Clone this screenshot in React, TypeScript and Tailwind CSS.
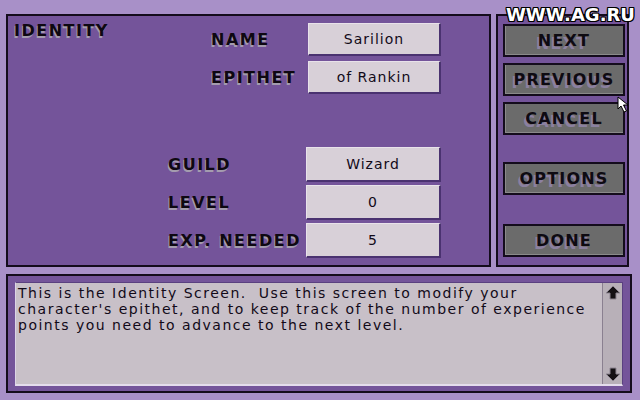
import React from "react";

const LABEL =
  "font-['DejaVu_Sans',sans-serif] font-bold text-[16px] leading-[16px] tracking-[1.5px] text-[#0e0812] [text-shadow:-1px_2px_0_#a49cae]";

const VALUE =
  "font-['DejaVu_Sans',sans-serif] text-[14px] leading-[16px] tracking-[1px] text-[#120a18]";

const BUTTON =
  "h-[33px] w-[122px] shrink-0 border-2 border-[#140c1c] bg-[#6b6b6b] shadow-[inset_1px_-1px_0_#8a8a8a] flex items-center justify-center font-['DejaVu_Sans',sans-serif] font-bold text-[16px] leading-[16px] tracking-[1.2px] text-[#0e0a12] [text-shadow:-2px_3px_0_#8b80a0]";

type FieldProps = { label: string; value: string };

const Field = ({ label, value }: FieldProps) => (
  <>
    <div className={`flex items-center ${LABEL}`}>{label}</div>
    <div className="flex items-center justify-center bg-[#d8d0d8] border-t border-l border-t-[#e8e2ea] border-l-[#e8e2ea] border-b-2 border-r-2 border-b-[#4a3270] border-r-[#4a3270]">
      <span className={VALUE}>{value}</span>
    </div>
  </>
);

const Arrow = ({ down = false }: { down?: boolean }) => (
  <svg width="16" height="15" viewBox="0 0 16 15" className={down ? "rotate-180" : ""}>
    <path d="M8 1 L15 8 L11 8 L11 14 L5 14 L5 8 L1 8 Z" fill="#141014" stroke="#8c8490" strokeWidth="1" />
  </svg>
);

const Cursor = () => (
  <svg width="16" height="17" viewBox="0 0 16 17" className="absolute left-[617px] top-[96px]">
    <path d="M1 1 L1 13 L4 10 L7 16 L9.5 15 L6.5 9 L11 9 Z" fill="#ffffff" stroke="#000000" strokeWidth="1" />
  </svg>
);

const LINES = [
  "This is the Identity Screen.  Use this screen to modify your",
  "character's epithet, and to keep track of the number of experience",
  "points you need to advance to the next level.",
];

export default function App() {
  return (
    <div className="relative w-[640px] h-[400px] overflow-hidden bg-[#a890c8] pt-[14px] pl-[6px]">
      {/* top row: identity sheet + command column */}
      <div className="flex h-[253px] gap-[5px]">
        <div className="w-[485px] border-2 border-[#140c1c] bg-[#74549a] pt-[7px] flex flex-col">
          <div className="flex">
            <div className="w-[203px] pl-[6px]">
              <div className={`${LABEL} leading-[14px]`}>IDENTITY</div>
            </div>
            <div className="grid grid-cols-[97px_133px] auto-rows-[33px] gap-y-[5px]">
              <Field label="NAME" value="Sarilion" />
              <Field label="EPITHET" value="of Rankin" />
            </div>
          </div>
          <div className="mt-[53px] ml-[160px] grid grid-cols-[138px_135px] auto-rows-[35px] gap-y-[3px]">
            <Field label="GUILD" value="Wizard" />
            <Field label="LEVEL" value="0" />
            <Field label="EXP. NEEDED" value="5" />
          </div>
        </div>

        <div className="w-[133px] border-2 border-[#140c1c] bg-[#74549a] pt-[8px] pl-[5px] flex flex-col">
          <div className={BUTTON}>NEXT</div>
          <div className={`${BUTTON} mt-[6px]`}>PREVIOUS</div>
          <div className={`${BUTTON} mt-[6px]`}>CANCEL</div>
          <div className={`${BUTTON} mt-[27px]`}>OPTIONS</div>
          <div className={`${BUTTON} mt-[29px]`}>DONE</div>
        </div>
      </div>

      {/* help text box */}
      <div className="mt-[7px] w-[626px] h-[119px] border-2 border-[#140c1c] bg-[#74549a] px-[7px] pt-[6px] pb-[5px]">
        <div className="flex h-full bg-[#c8c0c8] border-t border-l border-b-2 border-r border-t-[#5a4080] border-l-[#dcd4e6] border-b-[#e4dcec] border-r-[#5a4080]">
          <div className="flex-1 pl-[2px] pt-[2px]">
            {LINES.map((line) => (
              <div key={line} className="whitespace-pre font-['DejaVu_Sans',sans-serif] text-[14px] leading-[16px] tracking-[1.5px] text-[#120a18]">
                {line}
              </div>
            ))}
          </div>
          <div className="w-[20px] bg-[#b8b0b8] border-l border-l-[#8a8090] flex flex-col items-center justify-between py-[2px]">
            <Arrow />
            <Arrow down />
          </div>
        </div>
      </div>

      <div className="absolute left-[506px] top-[5px] font-['DejaVu_Sans',sans-serif] font-bold text-[18px] leading-[20px] text-white [text-shadow:1px_0_0_#000,-1px_0_0_#000,0_1px_0_#000,0_-1px_0_#000,1px_1px_0_#000,-1px_-1px_0_#000,1px_-1px_0_#000,-1px_1px_0_#000]">
        WWW.AG.RU
      </div>
      <Cursor />
    </div>
  );
}
